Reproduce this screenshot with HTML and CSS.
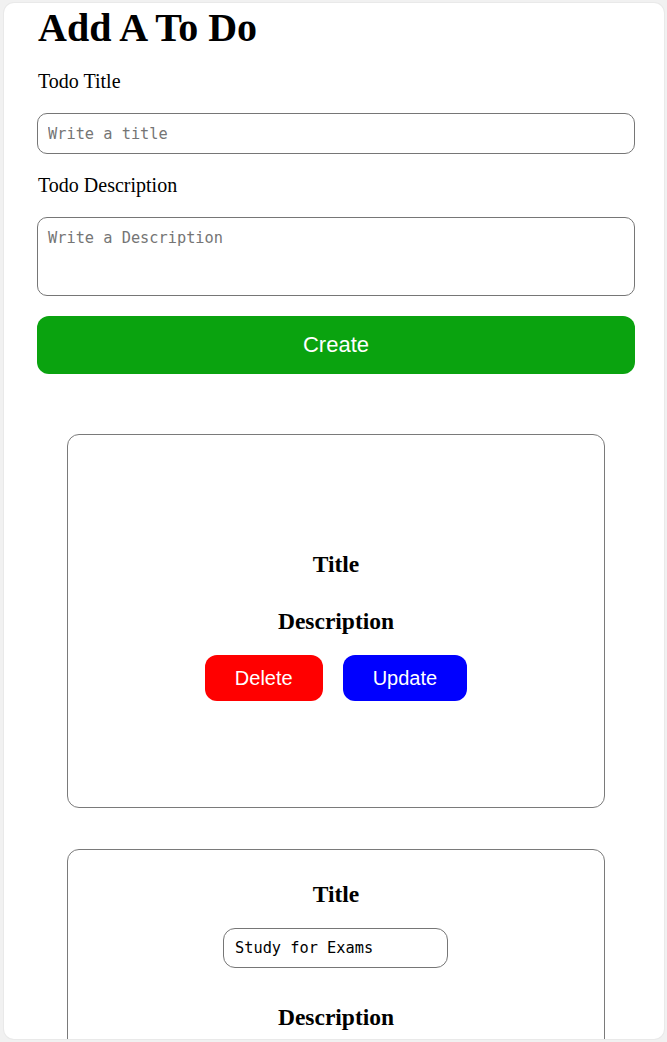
FILE: index.html
```html
<!DOCTYPE html>
<html lang="en">
<head>
<meta charset="utf-8">
<title>Add A To Do</title>
<link rel="stylesheet" href="styles.css">
</head>
<body>
<div class="frame">
  <div class="page">
    <h1 class="heading">Add A To Do</h1>
    <label class="label" for="t">Todo Title</label>
    <input id="t" class="field" type="text" placeholder="Write a title">
    <label class="label" for="d">Todo Description</label>
    <textarea id="d" class="field area" placeholder="Write a Description"></textarea>
    <button class="create">Create</button>

    <div class="card card-view">
      <h3 class="card-title">Title</h3>
      <h3 class="card-desc">Description</h3>
      <div class="actions">
        <button class="btn delete">Delete</button>
        <button class="btn update">Update</button>
      </div>
    </div>

    <div class="card card-edit">
      <h3 class="card-title">Title</h3>
      <input class="edit-field" type="text" value="Study for Exams">
      <h3 class="card-desc2">Description</h3>
    </div>
  </div>
</div>
</body>
</html>
```

FILE: styles.css
```css
html, body {
  margin: 0;
  padding: 0;
  background: #f1f1f1;
}
body {
  width: 667px;
  height: 1042px;
  overflow: hidden;
}
.frame {
  margin: 3px 3px 0 4px;
  height: 1036px;
  background: #ffffff;
  border-radius: 10px;
  overflow: hidden;
  box-shadow: 0 0 0 1px #e9e9e9;
}
.page {
  display: flex;
  flex-direction: column;
  padding: 0 29px 0 33px;
  font-family: "Liberation Serif", "Times New Roman", serif;
  color: #000;
}
.heading {
  margin: 3px 0 0 1px;
  font-size: 40px;
  line-height: 44px;
  font-weight: bold;
}
.label {
  display: block;
  margin: 20px 0 0 1px;
  font-size: 20px;
  line-height: 22px;
}
.field {
  box-sizing: border-box;
  margin: 21px 0 0 0;
  width: 598px;
  height: 41px;
  padding: 0 10px;
  border: 1px solid #767676;
  border-radius: 10px;
  font-family: "DejaVu Sans Mono", monospace;
  font-size: 15.3px;
  color: #000;
  background: #fff;
  outline: none;
}
.field::placeholder {
  color: #757575;
}
.area {
  height: 79px;
  padding: 11px 10px;
  resize: none;
  line-height: 18px;
}
.create {
  margin-top: 20px;
  width: 598px;
  height: 58px;
  border: none;
  border-radius: 12px;
  background: #0aa30f;
  color: #fff;
  font-family: "Liberation Sans", Arial, sans-serif;
  font-size: 22px;
}
.card {
  box-sizing: border-box;
  width: 538px;
  margin-left: 30px;
  border: 1px solid #7a7a7a;
  border-radius: 12px;
  display: flex;
  flex-direction: column;
  align-items: center;
}
.card-view {
  margin-top: 60px;
  height: 374px;
  padding-top: 116px;
}
.card-edit {
  margin-top: 41px;
  height: 240px;
  padding-top: 31px;
}
.card-title, .card-desc, .card-desc2 {
  margin: 0;
  font-size: 23.5px;
  line-height: 26px;
  font-weight: bold;
}
.card-desc {
  margin-top: 31px;
}
.actions {
  display: flex;
  gap: 20px;
  margin-top: 21px;
}
.btn {
  height: 46px;
  padding: 0 30px;
  border: none;
  border-radius: 12px;
  color: #fff;
  font-family: "Liberation Sans", Arial, sans-serif;
  font-size: 20px;
}
.delete { background: #ff0000; }
.update { background: #0000ff; }
.edit-field {
  box-sizing: border-box;
  margin: 21px 1px 0 0;
  width: 225px;
  height: 40px;
  padding: 0 11px;
  border: 1px solid #767676;
  border-radius: 12px;
  font-family: "DejaVu Sans Mono", monospace;
  font-size: 15.3px;
  color: #000;
  outline: none;
}
.card-desc2 {
  margin-top: 36px;
}
```
